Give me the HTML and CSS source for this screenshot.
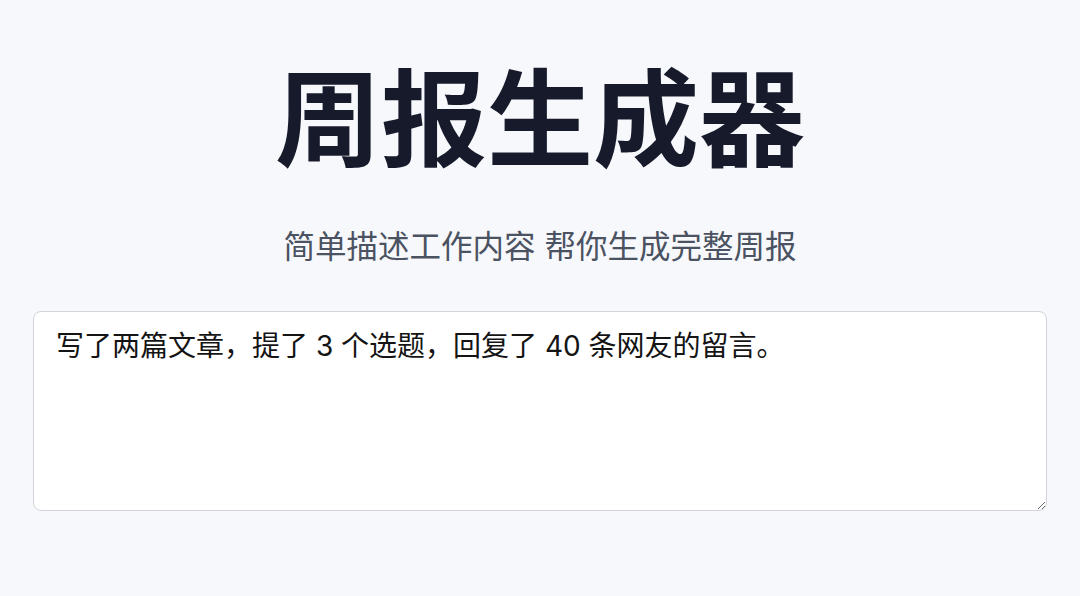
FILE: index.html
```html
<!DOCTYPE html>
<html lang="zh-CN">
<head>
<meta charset="utf-8">
<title>周报生成器</title>
<link rel="stylesheet" href="styles.css">
</head>
<body>
<main class="page">
  <h1 class="title">周报生成器</h1>
  <p class="subtitle">简单描述工作内容 帮你生成完整周报</p>
  <textarea class="input">写了两篇文章，提了 3 个选题，回复了 40 条网友的留言。</textarea>
</main>
</body>
</html>
```

FILE: styles.css
```css
html, body {
  margin: 0;
  padding: 0;
  background: #f7f8fc;
}
body {
  font-family: "Inter", "Noto Sans CJK SC", sans-serif;
}
.page {
  display: flex;
  flex-direction: column;
  align-items: stretch;
  padding: 57px 33px 0;
}
.title {
  margin: 0;
  text-align: center;
  font-size: 106px;
  line-height: 126px;
  font-weight: 700;
  color: #161a2a;
}
.subtitle {
  margin: 42px 0 0;
  text-align: center;
  font-size: 31.5px;
  line-height: 44px;
  color: #4b5261;
}
.input {
  margin-top: 42px;
  box-sizing: border-box;
  height: 200px;
  padding: 14px 22px;
  border: 1px solid #d1d4da;
  border-radius: 8px;
  background: #ffffff;
  font-family: "Inter", "Noto Sans CJK SC", sans-serif;
  font-size: 28px;
  line-height: 40px;
  color: #141414;
  resize: vertical;
  outline: none;
}
```
